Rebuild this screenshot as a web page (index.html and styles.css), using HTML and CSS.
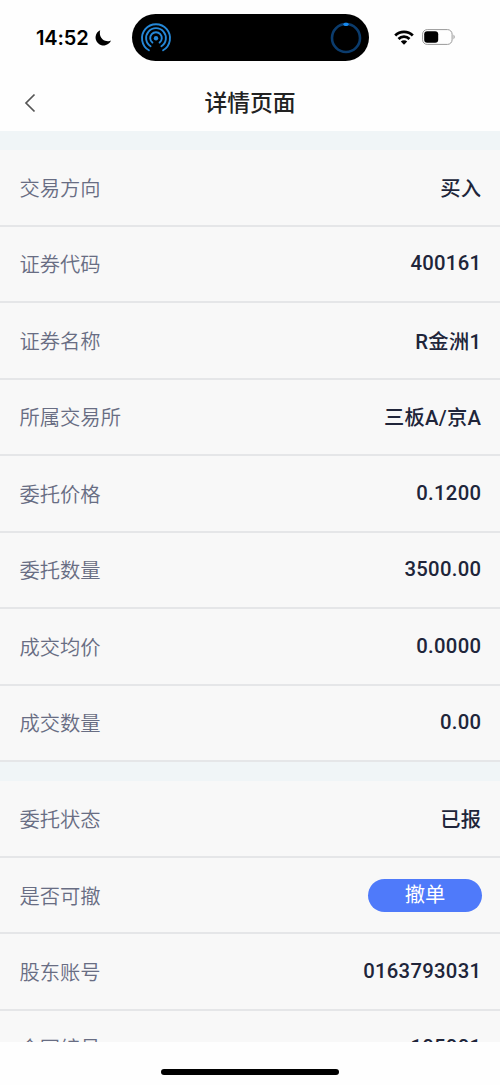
FILE: index.html
```html
<!DOCTYPE html>
<html lang="zh-CN">
<head>
<meta charset="utf-8">
<meta name="viewport" content="width=device-width">
<title>详情页面</title>
<link rel="stylesheet" href="styles.css">
</head>
<body>
<div class="screen">
  <header class="status">
    <div class="clock">
      <span class="time">14:52</span>
      <svg class="moon" viewBox="0 0 16 16"><path d="M5.200 .2A8 8 0 1 0 16 10.400C14.500 11.300 10.500 11.800 7.500 9.200C4.800 6.800 4.400 3.200 5.200 .2Z"/></svg>
    </div>
    <div class="island">
      <svg class="airdrop" viewBox="0 0 32 32">
        <g fill="none" stroke="#2588d8" stroke-width="1.900" stroke-linecap="round">
          <path d="M8.900 28.300A14 14 0 1 1 23.100 28.300"/>
          <path d="M10.600 24.300A9.900 9.900 0 1 1 21.400 24.300"/>
          <path d="M12.400 20.600A5.800 5.800 0 1 1 19.600 20.600"/>
        </g>
        <circle cx="16" cy="16.200" r="2.200" fill="#2588d8"/>
      </svg>
      <svg class="ring" viewBox="0 0 32 32">
        <circle cx="16" cy="16" r="14" fill="none" stroke="#0b3c6d" stroke-width="2.600"/>
        <path d="M15 2.300h2" stroke="#1689ee" stroke-width="3.200" stroke-linecap="round"/>
      </svg>
    </div>
    <div class="signals">
      <svg class="wifi" viewBox="0 0 20 15">
        <g fill="none" stroke="#000" stroke-width="2.800">
          <path d="M1.200 5.400A12.600 12.600 0 0 1 18.800 5.400"/>
          <path d="M4.500 8.900A7.900 7.900 0 0 1 15.500 8.900"/>
        </g>
        <path d="M6.800 11.500A4.500 4.500 0 0 1 13.200 11.500L10 14.800Z"/>
      </svg>
      <svg class="battery" viewBox="0 0 34 16">
        <rect x=".6" y=".6" width="29.500" height="14.800" rx="4.600" fill="none" stroke="#999"/>
        <rect x="2.200" y="2.200" width="14" height="11.600" rx="3"/>
        <path d="M31.500 5.600Q34 8 31.500 10.400Z" fill="#999"/>
      </svg>
    </div>
  </header>
  <nav class="navbar">
    <svg class="back" viewBox="0 0 12 20"><path d="M10.500 1.500L2 10l8.500 8.500" fill="none" stroke="#555" stroke-width="1.700"/></svg>
    <h1 class="title">详情页面</h1>
  </nav>
  <main class="content">
    <section class="group">
      <div class="row"><span class="label">交易方向</span><span class="value">买入</span></div>
      <div class="row"><span class="label">证券代码</span><span class="value">400161</span></div>
      <div class="row"><span class="label">证券名称</span><span class="value">R金洲1</span></div>
      <div class="row"><span class="label">所属交易所</span><span class="value">三板A/京A</span></div>
      <div class="row"><span class="label">委托价格</span><span class="value">0.1200</span></div>
      <div class="row"><span class="label">委托数量</span><span class="value">3500.00</span></div>
      <div class="row"><span class="label">成交均价</span><span class="value">0.0000</span></div>
      <div class="row"><span class="label">成交数量</span><span class="value">0.00</span></div>
    </section>
    <section class="group">
      <div class="row"><span class="label">委托状态</span><span class="value">已报</span></div>
      <div class="row"><span class="label">是否可撤</span><button class="cancel">撤单</button></div>
      <div class="row"><span class="label">股东账号</span><span class="value">0163793031</span></div>
      <div class="row"><span class="label">合同编号</span><span class="value">105001</span></div>
    </section>
  </main>
  <footer class="home"><div class="bar"></div></footer>
</div>
</body>
</html>
```
FILE: styles.css
```css
* { box-sizing: border-box; }
body { margin: 0; background: #fefefe; font-family: Roboto, "Noto Sans CJK SC", sans-serif; }
.screen { width: 500px; height: 1085px; display: flex; flex-direction: column; overflow: hidden; }
.status { height: 75px; flex: none; display: grid; grid-template-columns: 132px 237px 1fr; align-items: start; padding-top: 14px; }
.clock { height: 47px; display: flex; align-items: center; gap: 6px; padding-left: 36px; }
.time { font: 600 20px/24px Inter, sans-serif; letter-spacing: -.1px; }
.moon { width: 16px; height: 16px; flex: none; }
.island { height: 47px; border-radius: 24px; background: #000; display: flex; align-items: center; justify-content: space-between; padding: 0 7px 0 8px; }
.airdrop, .ring { width: 32px; height: 32px; }
.signals { height: 47px; display: flex; align-items: center; gap: 8px; padding: 0 0 1px 25px; }
.wifi { width: 20px; height: 15px; }
.battery { width: 34px; height: 16px; }
.navbar { height: 56px; flex: none; display: grid; grid-template-columns: 60px 1fr 60px; align-items: center; }
.back { width: 12px; height: 20px; margin: 0 0 1px 24px; }
.title { margin: 0; padding-top: 2px; text-align: center; font-size: 22.8px; line-height: 30px; font-weight: 500; color: #222; }
.content { height: 910.5px; flex: none; overflow: hidden; background: #f0f5f7; }
.group { margin-top: 18.7px; background: #f8f8f8; }
.row { height: 76.45px; display: flex; align-items: center; justify-content: space-between; padding: 0 19px 1.5px 19.5px; border-bottom: 2px solid #e5e6e8; }
.row:first-child { height: 77.3px; }
.label { font-size: 20.3px; color: #686d83; font-weight: 350; }
.value { font-size: 20.3px; font-weight: 500; color: #20253a; letter-spacing: .28px; margin-right: -.28px; }
.cancel { width: 114px; height: 33px; margin: 2px -1px 0 0; border: 0; border-radius: 17px; padding: 0; background: #4f7afa; color: #fff; font: 400 20.3px/33px Roboto, "Noto Sans CJK SC", sans-serif; }
.home { flex: 1; padding-top: 27px; }
.bar { width: 178px; height: 6px; border-radius: 3px; background: #000; margin: 0 auto; }
```
